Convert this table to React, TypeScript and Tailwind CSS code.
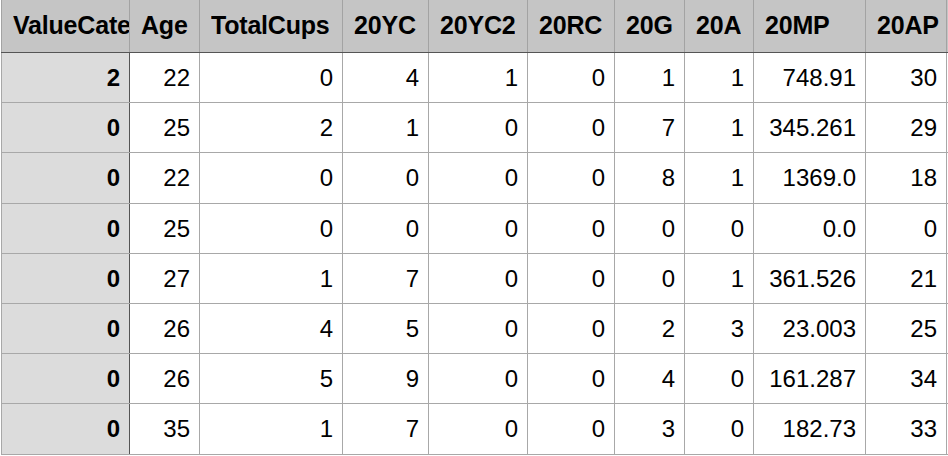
const headers = ["ValueCategory", "Age", "TotalCups", "20YC", "20YC2", "20RC", "20G", "20A", "20MP", "20AP"];

// widths include the right border line
const widths = [
  "w-[129px]",
  "w-[70px]",
  "w-[143px]",
  "w-[86px]",
  "w-[99px]",
  "w-[87px]",
  "w-[70px]",
  "w-[69px]",
  "w-[112px]",
  "w-[81px]",
];

const rows: (string | number)[][] = [
  [2, 22, 0, 4, 1, 0, 1, 1, "748.91", 30],
  [0, 25, 2, 1, 0, 0, 7, 1, "345.261", 29],
  [0, 22, 0, 0, 0, 0, 8, 1, "1369.0", 18],
  [0, 25, 0, 0, 0, 0, 0, 0, "0.0", 0],
  [0, 27, 1, 7, 0, 0, 0, 1, "361.526", 21],
  [0, 26, 4, 5, 0, 0, 2, 3, "23.003", 25],
  [0, 26, 5, 9, 0, 0, 4, 0, "161.287", 34],
  [0, 35, 1, 7, 0, 0, 3, 0, "182.73", 33],
];

const rowHeights = ["h-[50px]", "h-[50px]", "h-[51px]", "h-[50px]", "h-[50px]", "h-[50px]", "h-[50px]", "h-[51px]"];

export default function App() {
  return (
    <div
      className="w-[948px] h-[456px] overflow-hidden bg-white pl-px text-black"
      style={{ fontFamily: '"Liberation Sans", Arial, sans-serif' }}
    >
      {/* Header row */}
      <div className="flex h-[53px] bg-[#c5c5c5] border-b border-[#555555]">
        {headers.map((h, i) => (
          <div
            key={h}
            className={`${widths[i]} shrink-0 flex items-center overflow-hidden whitespace-nowrap pl-[11px] text-[25px] font-bold tracking-[-0.2px] border-r border-[#a3a3a3] ${
              i === 0 ? "border-l" : ""
            }`}
          >
            <span className="block overflow-hidden">{h}</span>
          </div>
        ))}
      </div>

      {/* Data rows */}
      {rows.map((row, r) => (
        <div key={r} className={`flex ${rowHeights[r]} border-b border-[#a8a8a8]`}>
          {row.map((v, i) => (
            <div
              key={i}
              className={`${widths[i]} shrink-0 flex items-center justify-end overflow-hidden whitespace-nowrap pr-[9px] text-[24px] ${
                i === 0
                  ? "bg-[#dcdcdc] font-bold border-l border-l-[#a8a8a8] border-r border-r-[#555555]"
                  : "border-r border-[#a8a8a8]"
              }`}
            >
              {v}
            </div>
          ))}
        </div>
      ))}
    </div>
  );
}
